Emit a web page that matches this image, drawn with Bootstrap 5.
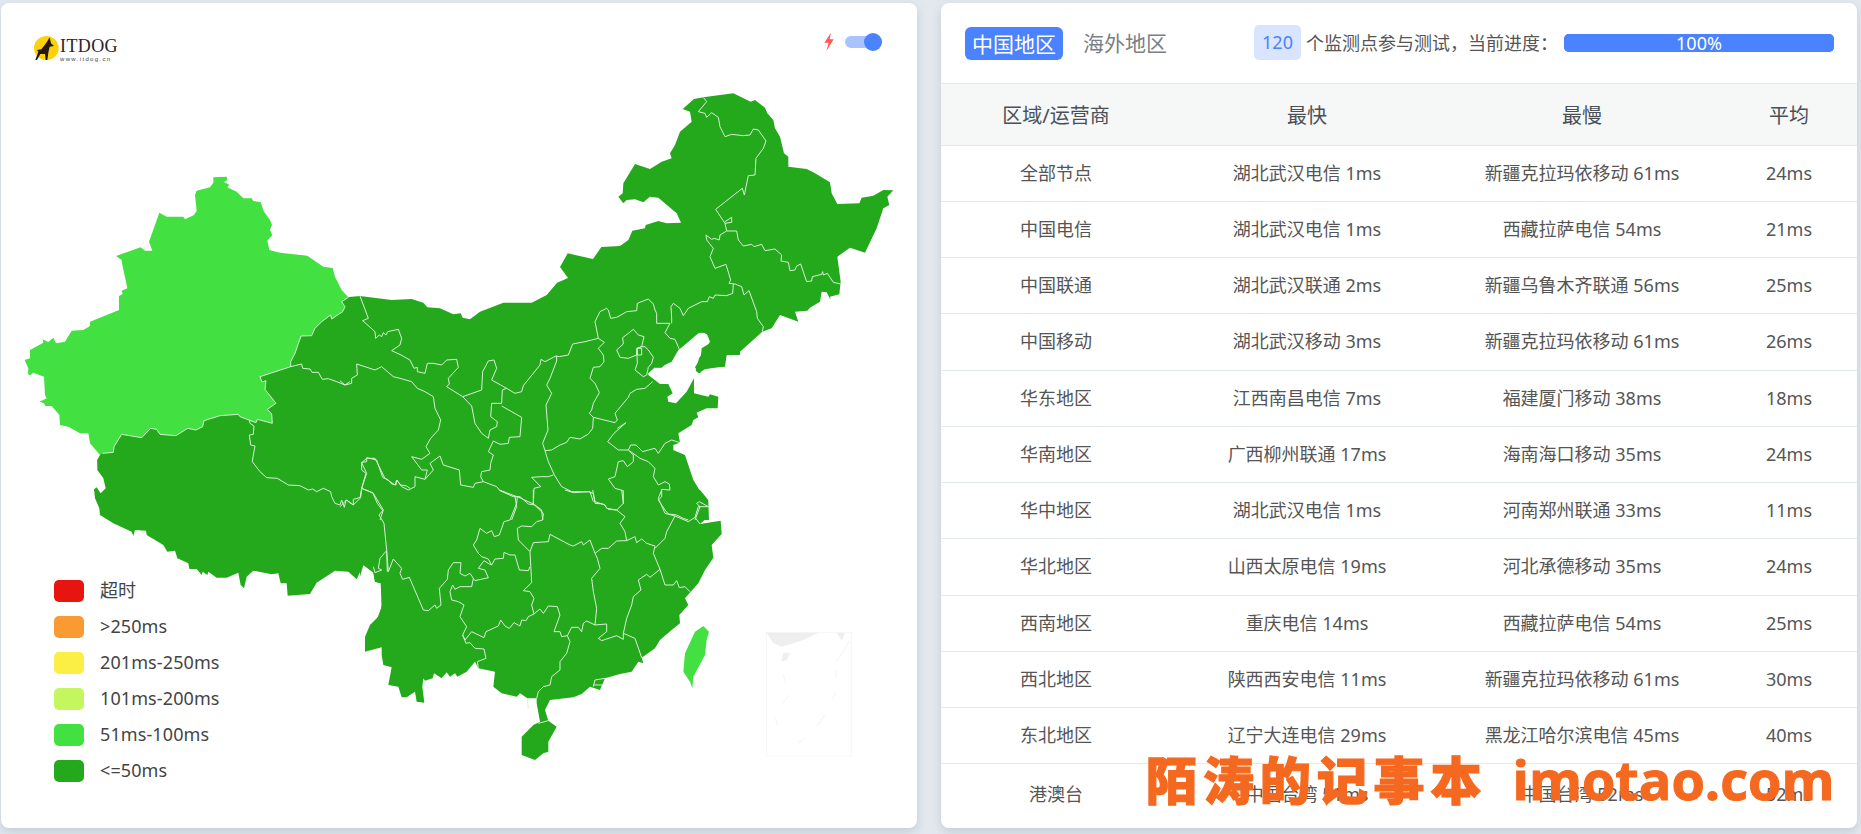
<!doctype html>
<html lang="zh-CN">
<head>
<meta charset="utf-8">
<title>ITDOG</title>
<link href="https://cdn.jsdelivr.net/npm/bootstrap@5.3.0/dist/css/bootstrap.min.css" rel="stylesheet">
<style>
html,body{height:100%;overflow:hidden}
body{background:#e2e8ee;font-family:"Noto Sans","Noto Sans CJK SC",sans-serif;color:#495057}
.page-wrap{padding:3px 4px 6px 1px;height:834px;gap:24px}
.panel{width:916px;height:825px;background:#fff;border-radius:8px;box-shadow:0 4px 10px rgba(140,155,175,.35);overflow:hidden;position:relative}
.map-canvas{position:absolute;left:0;top:0;width:916px;height:825px}
.land{fill:#24a91d}
.land-light{fill:#43e041}
.prov{fill:none;stroke:#d8f0d5;stroke-width:3;stroke-linejoin:round}
.map-head{position:relative;padding:32px 35px 0 32px}
.logo-box{width:90px;height:28px}
.logo-words{margin-left:-1px;margin-top:4px;line-height:1}
.logo-name{font:18px/14px "Liberation Serif",serif;letter-spacing:.4px;color:#2b2422;display:block}
.logo-url{font:6px/8px "Liberation Sans",sans-serif;letter-spacing:1.35px;color:#444;display:block;margin-top:2px}
.spark{width:12px;height:20px;margin-right:10px}
.slide-track{width:37px;height:12px;background:#a9c3ff;border-radius:6px;position:relative}
.slide-knob{position:absolute;right:0;top:-3px;width:18px;height:18px;border-radius:50%;background:#4a82ff}
.top-ctrl{margin-top:-3px}
.legend-list{position:relative;padding:0 0 39px 53px;font-size:18px;color:#444}
.legend-row{height:36px}
.legend-chip{width:30px;height:22px;border-radius:5px;margin-right:16px}
.c-a{background:#e8140f}.c-b{background:#f99a33}.c-c{background:#fbee45}.c-d{background:#c3f75d}.c-e{background:#43e041}.c-f{background:#24a91d}
.legend-word{line-height:24px;margin-top:-3px;letter-spacing:.1px}
.tab-head{height:81px;border-bottom:1px solid #e4e9ef;padding:0 23px 0 24px}
.tab-on{background:#4a82ff;color:#fff;font-size:21px;line-height:34px;height:33px;width:98px;text-align:center;border-radius:6px;flex:none}
.tab-off{color:#7a7f85;font-size:21px;line-height:34px;margin-left:20px;width:171px;flex:none}
.count-box{background:#d9e5ff;color:#4a82ff;font-size:18px;width:47px;height:35px;line-height:35px;text-align:center;border-radius:5px;margin-top:-1px;flex:none}
.count-text{font-size:18px;color:#555;margin-left:5px;width:258px;white-space:nowrap;flex:none}
.bar-outer{width:270px;height:18px;border-radius:5px;background:#4a82ff;flex:none;margin-top:-1px}
.bar-outer .progress-bar{background:#4a82ff;font-size:18px;line-height:18px}
.stat-table{margin:0;table-layout:fixed;width:916px;font-size:18px;color:#555}
.stat-table th{background:#f6f7f7;color:#495057;font-weight:400;font-size:20px;height:61px;padding:3px 0 0;vertical-align:middle;border-bottom:1px solid #e4e9ef}
.stat-table td{height:56.25px;padding:0;vertical-align:middle;border-bottom:1px solid #e4e9ef;color:#555}
.stat-table tr:last-child td{height:60px;border-bottom:0}
.w-a{width:230px}.w-b{width:272px}.w-c{width:278px}.w-d{width:136px}
.stamp{position:absolute;left:205px;top:750px;color:#f4691f;white-space:nowrap;line-height:50px;font-weight:700;pointer-events:none}
.stamp-cn{font-family:"Noto Sans CJK SC",sans-serif;font-size:51px;letter-spacing:5.9px;font-weight:900;-webkit-text-stroke:1.2px #f4691f}
.stamp-en{font-family:"Open Sans","Noto Sans",sans-serif;font-size:54px;margin-left:25px;-webkit-text-stroke:1px #f4691f}
</style>
</head>
<body>
<div class="d-flex page-wrap">
  <section class="panel d-flex flex-column justify-content-between">
    <svg class="map-canvas" viewBox="1 3 916 825" aria-hidden="true">
      <!-- tile 10: Tibet -->
      <g transform="translate(90 420) scale(.33333)">
        <polygon class="land" points="35,100 22,120 22,150 40,175 47,205 32,220 20,202 12,208 15,235 28,265 30,285 70,310 125,335 130,348 135,330 168,332 170,345 220,375 232,395 255,392 262,415 295,430 298,447 320,447 335,465 338,455 352,465 355,455 380,473 410,473 445,458 452,495 462,505 470,470 490,452 545,463 565,460 572,490 590,490 593,527 660,522 680,488 735,452 775,455 800,478 820,435 850,458 855,485 875,490 875,560 860,600 960,600 960,0 345,0 335,15 318,28 295,25 255,47 210,42 182,25 150,53 95,43 70,95"/>
      </g>
      <!-- tile 7: west dark -->
      <g transform="translate(20 170) scale(.33333)">
        <polygon class="land" points="985,382 800,450 650,700 240,800 240,855 232,870 235,900 990,900"/>
      </g>
      <!-- tile 8: north centre -->
      <g transform="translate(340 280) scale(.33333)">
        <polygon class="land" points="0,50 20,52 60,48 155,60 215,57 250,68 262,82 300,85 340,103 362,100 368,113 390,118 420,95 490,68 575,68 620,45 650,10 680,0 1200,0 1200,225 1160,225 1140,260 1095,268 1075,280 1065,262 1082,235 1085,205 1110,190 1112,170 1090,157 1075,160 1040,190 1015,210 995,245 960,262 945,262 925,280 925,285 960,312 985,312 998,340 982,350 985,365 1008,370 1040,335 1062,295 1062,340 1105,350 1110,343 1135,350 1133,385 1100,385 1070,398 1075,412 1060,420 1055,435 1015,460 1020,488 1000,495 1000,510 1035,525 1060,600 1075,625 1105,665 1107,720 0,720"/>
      </g>
      <!-- tile 9: north east -->
      <g transform="translate(600 85) scale(.33333)">
        <polygon class="land" points="248,72 282,42 310,37 400,25 452,50 465,45 495,68 502,85 520,105 525,130 540,155 552,205 565,215 565,245 620,252 640,262 690,292 695,325 712,357 778,355 785,338 820,332 850,315 880,316 862,335 868,360 850,370 830,430 795,503 750,488 712,515 722,590 718,628 690,635 692,645 680,622 665,620 660,650 630,668 622,677 585,680 595,710 540,690 515,730 487,740 420,800 380,810 375,845 310,850 300,865 287,858 297,820 330,770 320,745 295,742 235,795 205,830 185,848 165,848 155,830 145,860 100,870 0,870 -130,870 -130,594 -96,579 -120,546 -97,505 -21,522 4,486 60,483 85,465 97,437 135,430 137,420 175,408 200,415 243,413 230,385 175,338 150,335 130,352 105,343 80,345 70,355 55,335 68,325 70,295 105,237 150,252 185,230 215,220 210,205 225,180 240,140 275,110 270,80"/>
      </g>
      <!-- tile 11: south -->
      <g transform="translate(360 490) scale(.33333)">
        <polygon class="land" points="0,260 10,225 40,245 45,275 62,280 65,345 60,375 30,405 15,440 15,485 65,472 65,495 70,525 95,532 85,585 115,590 125,622 140,622 165,605 170,635 193,638 187,590 190,565 195,572 218,565 222,550 245,565 260,547 270,560 285,550 292,560 320,545 345,515 355,535 405,545 400,590 425,610 470,620 480,610 502,625 530,625 530,640 540,695 520,705 485,740 485,795 525,810 550,790 565,785 565,755 590,710 565,692 555,660 570,630 640,622 665,612 690,590 720,600 735,565 780,552 815,545 835,515 850,520 845,503 885,475 900,450 935,420 960,400 958,375 985,345 975,325 1015,280 1035,240 1060,203 1055,165 1085,132 1082,92 1020,102 1040,85 1045,30 1020,0 0,0"/>
        <polygon class="land-light" points="1030,408 1047,425 1040,450 1035,495 1000,560 997,595 990,575 970,545 975,490 1005,425"/>
      </g>
      <!-- Xinjiang -->
      <g transform="translate(20 170) scale(.33333)">
        <polygon class="land-light" points="580,22 620,20 622,30 612,36 628,44 622,52 650,65 670,85 695,85 700,93 722,97 732,125 750,150 756,165 750,180 757,195 742,212 748,240 780,248 862,257 910,290 938,294 945,320 965,360 985,382 965,395 975,410 968,425 935,447 932,435 905,455 885,475 875,497 843,498 825,550 812,575 812,590 720,620 726,636 738,632 735,658 768,700 742,718 755,732 757,760 712,748 708,758 660,740 655,733 600,737 552,752 548,770 528,780 503,775 468,797 420,793 410,778 392,775 365,803 305,793 282,830 280,847 248,850 240,855 210,820 205,790 180,790 145,770 120,765 118,735 95,708 76,708 72,700 58,695 80,685 75,675 72,620 40,608 30,616 24,612 25,595 14,570 30,565 30,540 70,518 68,508 85,516 100,503 108,520 135,515 155,482 190,480 210,468 210,455 297,420 297,378 308,372 305,362 322,355 306,280 305,270 288,258 362,232 375,242 397,242 387,215 418,128 440,140 490,140 495,148 522,135 530,122 525,75 530,62 570,52 580,38"/>
        <polyline class="prov" points="985,382 965,395 975,410 968,425 935,447 932,435 905,455 885,475 875,497 843,498 825,550 812,575 812,590 720,620 726,636 738,632 735,658 768,700 742,718 755,732 757,760 712,748 708,758 660,740 655,733 600,737 552,752 548,770 528,780 503,775 468,797 420,793 410,778 392,775 365,803 305,793 282,830 280,847 248,850"/>
        <polyline class="prov" points="812,590 845,582 848,595 870,597 876,607 895,607 907,628 925,626 950,635 975,645 990,635"/>
      </g>
      <!-- lines: tile 10 -->
      <g transform="translate(90 420) scale(.33333)">
        <polyline class="prov" points="478,0 480,10 492,18 490,43 478,45 482,75 495,78 490,105 487,125 510,155 530,173 562,175 595,195 630,197 655,210 668,207 680,215 700,205 722,215 725,230 735,250 750,255 755,240 763,262 768,240 790,255 790,238 812,232 815,205 828,160 815,150 815,127 830,125 830,113 860,120 878,172 895,180 905,192 918,195 920,180 932,195 950,198 960,205"/>
        <polyline class="prov" points="815,205 848,218 862,250 878,272 867,285 882,310 890,390 892,455"/>
        <polyline class="prov" points="890,392 870,415 865,445 875,450 855,458 850,440"/>
      </g>
      <!-- lines: tile 8 -->
      <g transform="translate(340 280) scale(.33333)">
        <polyline class="prov" points="60,48 85,115 68,122 105,155 107,175 118,165 125,170 130,158 138,165 143,155 175,148 185,175 180,195 155,212 183,225 210,240 222,265 232,262 232,275 255,280 262,250 280,250 305,255 320,240 350,238 355,262 325,295 328,312 320,320 368,350 425,330 428,275 445,243 462,240 470,265 455,300 500,325 525,340 545,335 550,317 600,255 603,238 615,245 640,232 648,228 658,230 685,225 698,192 735,185 755,180 775,175 770,150 765,125 780,95 800,85 805,90 812,115 830,112 855,98 860,95 890,92 892,70 925,57 940,72 945,90 950,100 950,130 990,130 975,158 990,175 1005,178 1018,208"/>
        <polygon class="prov" points="880,148 865,160 848,173 850,192 830,210 840,232 865,235 890,225 892,205 905,200 912,170 895,165"/>
        <polygon class="prov" points="915,200 925,210 940,232 935,250 925,262 920,285 910,290 885,270 892,250 890,205 905,200"/>
        <polygon class="prov" points="892,205 905,205 905,225 892,225"/>
        <polyline class="prov" points="775,175 793,187 775,205 790,225 792,245 780,260 760,262 750,295 765,310 778,338 760,370 755,390 748,400 760,412 758,445 745,462 720,477 690,472 680,487 660,495 635,510 615,512"/>
        <polyline class="prov" points="650,228 650,243 630,295 620,315 635,340 618,375 624,450 608,490 615,512 625,545 643,585 665,620 695,635 745,635 760,640 765,670 790,672 805,688 830,690"/>
        <polyline class="prov" points="760,412 825,428 832,420 825,400 865,352 870,340 890,328 915,325 938,305"/>
        <polyline class="prov" points="832,445 858,428 822,460 803,485 835,510 865,510 872,495 888,495 908,515 925,510 945,505 955,520 975,490 995,480 1020,488"/>
        <polyline class="prov" points="865,510 880,525 880,545 862,560 850,542 835,545 825,590 805,597 825,625 850,632 850,672"/>
        <polyline class="prov" points="868,512 900,535 925,545 945,565 940,590 955,615 975,605 988,612 990,630 965,628 965,650 955,660 975,690 985,702 1010,705 1030,715 1045,720"/>
        <polyline class="prov" points="1105,680 1078,665 1070,670 1080,680 1065,720"/>
        <polyline class="prov" points="500,325 487,330 485,370 455,370 452,410 472,425 470,440 450,450 445,475 425,460 405,430 395,378 368,350"/>
        <polyline class="prov" points="485,378 545,412 540,470 508,472 505,490 480,493 460,483 445,515 460,525 452,550 450,570 425,575 422,590 430,605 405,610 400,622 362,615 358,570 310,555 300,528 270,550 280,570 255,598 262,570 245,570 215,530 245,538 270,520 258,500 272,475 295,450 302,420 285,385 280,350 255,335 232,325 215,305 180,295 160,290 125,260 105,270 50,252 52,285 35,295 35,310 15,315 0,302"/>
        <polyline class="prov" points="430,605 470,620 480,632 520,650 525,650 540,650 565,672 585,675 605,690 608,720"/>
        <polyline class="prov" points="525,650 530,680 515,720"/>
        <polyline class="prov" points="640,585 625,590 605,590 575,592 602,620 582,625 580,670"/>
        <polyline class="prov" points="255,598 225,590 225,620 205,630 185,620 170,600 165,615 135,595 105,535 80,535 65,548 80,580 65,625 100,640 130,690 120,720"/>
        <polyline class="prov" points="65,625 60,655 40,675 20,660 0,680"/>
      </g>
      <!-- lines: tile 9 -->
      <g transform="translate(600 85) scale(.33333)">
        <polyline class="prov" points="310,37 320,50 295,80 315,85 320,97 335,83 355,97 360,125 375,155 395,148 430,152 450,150 460,132 475,135 498,168 490,190 468,220 465,270 445,272 433,330 427,310 347,373 375,415 380,438"/>
        <polyline class="prov" points="375,410 395,397 395,412 375,415"/>
        <polyline class="prov" points="380,438 410,438 415,465 430,483 455,478 462,485 485,478 495,497 525,492 545,510 543,528 565,532 570,557 585,555 590,543 602,537 620,590 635,588 637,575 665,568 668,560 670,570 682,565 700,592 722,597"/>
        <polyline class="prov" points="380,438 360,450 358,465 343,460 335,463 318,450 320,465 340,490 330,515 345,550 378,538 392,585 387,595 405,597 425,605 432,630 447,617 470,680 472,700 490,725 487,740"/>
        <polyline class="prov" points="400,597 398,625 380,632 345,630 340,640 328,635 322,650 305,650 265,670 250,692 240,670 220,655 213,665 215,700 215,715"/>
      </g>
      <!-- lines: tile 11 -->
      <g transform="translate(360 490) scale(.33333)">
        <polyline class="prov" points="80,185 85,245 100,207 125,235 120,250 128,268 148,262 175,325 190,360 205,362 225,345 230,355 243,345 238,295 262,268 265,240 280,218 303,218 300,250 315,258 330,250 340,265 345,272 385,263 375,240 355,235 372,212 388,222 395,225 405,207 430,205 432,187 450,195 465,195 478,240 505,242 510,230"/>
        <polyline class="prov" points="510,185 495,170 475,150 472,115 485,108 515,110 530,95 548,90 550,70 520,42 472,20 470,40 450,90 432,95 418,135 403,140 395,122 380,130 360,115 350,150 340,165 355,190 365,200 385,207 395,225"/>
        <polyline class="prov" points="418,0 465,18 472,20"/>
        <polyline class="prov" points="520,42 520,0"/>
        <polyline class="prov" points="340,265 335,290 300,290 285,298 278,285 270,305 275,330 295,335 312,345 300,380 320,410 308,435 315,450 335,425 372,443 378,425 415,408 422,390 435,408 448,415 462,398 480,408 485,390 498,392 505,380 522,372 515,345 522,325 510,305 490,302 515,278 510,185"/>
        <polyline class="prov" points="308,435 318,460 330,458 345,475 372,477 378,505 352,515 355,535"/>
        <polyline class="prov" points="522,372 540,357 550,370 565,348 592,350 600,375 582,425 600,425 605,440 622,437 635,412 655,412 665,425 670,400 680,393 705,405"/>
        <polyline class="prov" points="622,437 630,455 620,490 600,515 600,540 575,560 570,585 550,590 535,605 530,625"/>
        <polyline class="prov" points="705,405 710,355 700,305 695,265 720,235 712,205 705,190"/>
        <polyline class="prov" points="510,185 520,158 565,155 570,133 630,165 640,168 665,155 670,165 690,150 705,190 725,175 745,175 770,153 800,152"/>
        <polyline class="prov" points="800,152 825,140 830,158 845,147 860,160 885,168"/>
        <polyline class="prov" points="800,152 795,125 780,100 795,80 770,60 740,55 735,45 705,35 698,0"/>
        <polyline class="prov" points="615,0 640,8 690,5 700,35"/>
        <polyline class="prov" points="770,60 790,40 785,0"/>
        <polyline class="prov" points="885,168 880,190 900,238"/>
        <polyline class="prov" points="905,0 895,25 915,70 945,78 985,95 1005,82 1015,50 1045,50"/>
        <polyline class="prov" points="945,78 920,125 915,145 885,175"/>
        <polyline class="prov" points="1005,82 1020,102"/>
        <polyline class="prov" points="705,405 740,402 740,425 715,445 725,452 770,437 790,448 790,430 825,445 845,503"/>
        <polyline class="prov" points="790,430 800,385 815,345 820,320 843,300 835,270 860,253 870,262 900,238 915,285 940,285 950,272 958,293 975,290 990,305"/>
        <polyline class="prov" points="700,590 705,570 735,565"/>
        <polyline class="prov" points="700,585 730,585"/>
        <polyline class="prov" points="535,700 565,692"/>
        <polyline class="prov" points="502,625 505,655"/>
      </g>
      <!-- South China Sea inset -->
      <g transform="translate(670 610) scale(.33333)">
        <rect x="289" y="68" width="256" height="370" fill="none" stroke="#f6f6f6" stroke-width="3"/>
        <polygon fill="#eeeeee" points="290,68 445,68 400,90 335,110 310,100"/>
        <polygon fill="#eeeeee" points="500,68 525,68 515,92"/>
        <polygon fill="#f0f0f0" points="340,128 362,128 350,150 333,155"/>
        <g fill="none" stroke="#f7f7f7" stroke-width="4">
          <path d="M540 92 500 155M498 180V205M340 195 348 220M498 248 485 270M358 255 338 280M316 323 322 347M465 315 440 350M405 385 385 398"/>
        </g>
      </g>
    </svg>
    <header class="map-head d-flex justify-content-between align-items-start">
      <div class="logo-box d-flex">
        <svg width="28" height="28" viewBox="100 105 84 84" aria-hidden="true">
          <ellipse cx="140" cy="144" rx="37" ry="36" fill="#fdd20a"/>
          <polygon fill="#231815" points="150,112 154,130 163,138 150,140 146,158 143,180 138,180 136,162 122,162 112,180 107,180 116,155 112,150 125,148 135,135 142,125"/>
        </svg>
        <div class="logo-words"><span class="logo-name">ITDOG</span><span class="logo-url">www.itdog.cn</span></div>
      </div>
      <div class="d-flex align-items-center top-ctrl">
        <svg class="spark" viewBox="70 36 32 60" aria-hidden="true"><polygon fill="#ff5a5a" points="92,38 72,68 85,68 78,94 100,58 88,58"/></svg>
        <div class="slide-track"><div class="slide-knob"></div></div>
      </div>
    </header>
    <div class="legend-list">
      <div class="legend-row d-flex align-items-center"><span class="legend-chip c-a"></span><span class="legend-word">超时</span></div>
      <div class="legend-row d-flex align-items-center"><span class="legend-chip c-b"></span><span class="legend-word">&gt;250ms</span></div>
      <div class="legend-row d-flex align-items-center"><span class="legend-chip c-c"></span><span class="legend-word">201ms-250ms</span></div>
      <div class="legend-row d-flex align-items-center"><span class="legend-chip c-d"></span><span class="legend-word">101ms-200ms</span></div>
      <div class="legend-row d-flex align-items-center"><span class="legend-chip c-e"></span><span class="legend-word">51ms-100ms</span></div>
      <div class="legend-row d-flex align-items-center"><span class="legend-chip c-f"></span><span class="legend-word">&lt;=50ms</span></div>
    </div>
  </section>
  <section class="panel">
    <div class="tab-head d-flex align-items-center">
      <div class="tab-on">中国地区</div>
      <div class="tab-off">海外地区</div>
      <div class="count-box">120</div>
      <div class="count-text">个监测点参与测试，当前进度：</div>
      <div class="progress bar-outer"><div class="progress-bar w-100">100%</div></div>
    </div>
    <table class="table stat-table text-center">
      <colgroup><col class="w-a"><col class="w-b"><col class="w-c"><col class="w-d"></colgroup>
      <thead><tr><th>区域/运营商</th><th>最快</th><th>最慢</th><th>平均</th></tr></thead>
      <tbody>
        <tr><td>全部节点</td><td>湖北武汉电信 1ms</td><td>新疆克拉玛依移动 61ms</td><td>24ms</td></tr>
        <tr><td>中国电信</td><td>湖北武汉电信 1ms</td><td>西藏拉萨电信 54ms</td><td>21ms</td></tr>
        <tr><td>中国联通</td><td>湖北武汉联通 2ms</td><td>新疆乌鲁木齐联通 56ms</td><td>25ms</td></tr>
        <tr><td>中国移动</td><td>湖北武汉移动 3ms</td><td>新疆克拉玛依移动 61ms</td><td>26ms</td></tr>
        <tr><td>华东地区</td><td>江西南昌电信 7ms</td><td>福建厦门移动 38ms</td><td>18ms</td></tr>
        <tr><td>华南地区</td><td>广西柳州联通 17ms</td><td>海南海口移动 35ms</td><td>24ms</td></tr>
        <tr><td>华中地区</td><td>湖北武汉电信 1ms</td><td>河南郑州联通 33ms</td><td>11ms</td></tr>
        <tr><td>华北地区</td><td>山西太原电信 19ms</td><td>河北承德移动 35ms</td><td>24ms</td></tr>
        <tr><td>西南地区</td><td>重庆电信 14ms</td><td>西藏拉萨电信 54ms</td><td>25ms</td></tr>
        <tr><td>西北地区</td><td>陕西西安电信 11ms</td><td>新疆克拉玛依移动 61ms</td><td>30ms</td></tr>
        <tr><td>东北地区</td><td>辽宁大连电信 29ms</td><td>黑龙江哈尔滨电信 45ms</td><td>40ms</td></tr>
        <tr><td>港澳台</td><td>中国台湾 51ms</td><td>中国台湾 52ms</td><td>52ms</td></tr>
      </tbody>
    </table>
    <div class="stamp"><span class="stamp-cn">陌涛的记事本</span><span class="stamp-en">imotao.com</span></div>
  </section>
</div>
<script src="https://cdn.jsdelivr.net/npm/bootstrap@5.3.0/dist/js/bootstrap.bundle.min.js"></script>
</body>
</html>
